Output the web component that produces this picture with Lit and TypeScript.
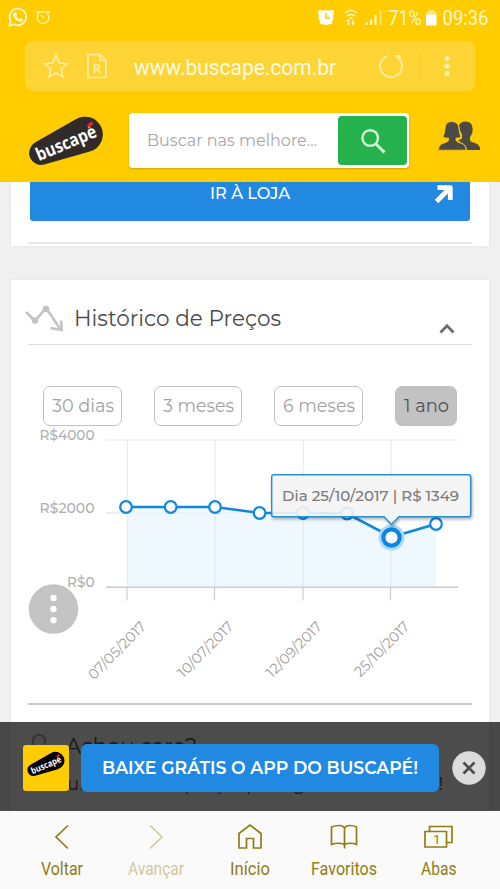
import { LitElement, html, svg, css } from "lit";
import { customElement } from "lit/decorators.js";

const SANS = 'Montserrat, Inter, "Open Sans", sans-serif';
const ROBOTO = 'Roboto, "Liberation Sans", sans-serif';

// A line of text fitted to a fixed width; the baseline sits `size` pixels below its top.
const label = (text: string, w: number, size: number, fill: string, weight = 400, family = SANS) => html`
  <svg class="label" width=${w} height=${Math.round(size * 1.3)} overflow="visible">
    <text x="0" y=${size} font-family=${family} font-size=${size} font-weight=${weight} fill=${fill}
      textLength=${w} lengthAdjust="spacingAndGlyphs">${text}</text>
  </svg>`;

const logo = (w: number, fill: string) => html`
  <svg class="mark" width=${w} viewBox="0 0 76 52" height=${(w * 52) / 76}>
    <path fill=${fill} d="M7 27.6 48.2 4A17.8 17.8 0 1 1 61.8 36.6L16.3 49.5A12 12 0 0 1 7 27.6Z"/>
    <text transform="translate(11 46.3) rotate(-23)" x="0" y="0" font-family="Open Sans, sans-serif" font-weight="700" font-size="18"
      fill="#fff" textLength="64" lengthAdjust="spacingAndGlyphs">buscapé</text>
    <path d="M59.800 11.500 64.500 7.500" stroke="#e0262c" stroke-width="3.400"/>
  </svg>`;

const points = [[126, 507], [170.7, 507], [215, 507], [259.6, 513], [303, 513], [347, 513.5], [391.5, 537], [436, 524]];
const dates: [number, string, number][] = [[127.5, "07/05/2017", 75], [215, "10/07/2017", 72], [303.5, "12/09/2017", 72], [391, "25/10/2017", 71]];
const levels: [number, string, number][] = [[440, "R$4000", 55], [513, "R$2000", 55], [587, "R$0", 27.5]];

@customElement("price-chart")
class PriceChart extends LitElement {
  static styles = css`:host, svg { display: block; } .shadow { filter: drop-shadow(1px 2px 1.5px rgba(0,0,0,.3)); }`;
  render() {
    const line = points.map((p) => p.join(",")).join(" ");
    return html`<svg width="478" height="277" viewBox="11 426 478 277">
      ${levels.map(([y, t, w]) => svg`
        <path d=${`M106 ${y}H458`} stroke="#efefef" stroke-width="1.5"/>
        <text x=${94.5 - w} y=${y - 0.3} font-family=${SANS} font-size="14" font-weight="500" fill="#b0b0b0"
          textLength=${w} lengthAdjust="spacingAndGlyphs">${t}</text>`)}
      <polygon points=${`128,587 128,507 ${line} 436,587`} fill="#eff8fe"/>
      ${dates.map(([x, t, w]) => svg`
        <path d=${`M${x} 440V587`} stroke="#dfe7ed" stroke-width="1.3" opacity=".75"/>
        <path d=${`M${x - 0.5} 587V600.500`} stroke="#c6ccd2" stroke-width="1.2"/>
        <text transform=${`translate(${x + 19.5} 627.5) rotate(-45)`} font-family=${SANS} font-size="14.500" font-weight="400"
          fill="#a0a0a0" text-anchor="end" textLength=${w} lengthAdjust="spacingAndGlyphs">${t}</text>`)}
      <path d="M106 513H458" stroke="#e2e9ee" stroke-width="1" opacity=".6"/>
      <path d="M106 587.300H458" stroke="#c5cfda" stroke-width="1.4"/>
      <polyline points=${line} fill="none" stroke="#1088e0" stroke-width="2.600"/>
      ${points.filter((_, i) => i !== 6).map(([x, y]) => svg`<circle cx=${x} cy=${y} r="5.800" fill="#fff" stroke="#1088e0" stroke-width="2.200"/>`)}
      <circle cx="391.500" cy="537.500" r="13" fill="#a9dcf8"/>
      <circle cx="391.500" cy="537.500" r="8.200" fill="#fff" stroke="#0b86e6" stroke-width="4.200"/>
      <path class="shadow" d="M273.500 474.800H468.500Q470.700 474.800 470.700 477V514.500Q470.700 516.700 468.500 516.700H399L391.500 524.500 384 516.700H273.500Q271.700 516.700 271.700 514.500V477Q271.700 474.800 273.500 474.800Z"
        fill="#fdfdfd" fill-opacity=".87" stroke="#2590d8" stroke-width="1.500"/>
      <text x="282" y="500.700" font-family=${SANS} font-size="15.500" font-weight="500" fill="#7a7a7a" textLength="177"
        lengthAdjust="spacingAndGlyphs">Dia 25/10/2017 | R$ 1349</text>
    </svg>`;
  }
}

@customElement("app-root")
class AppRoot extends LitElement {
  static styles = css`
    :host { display: flex; flex-direction: column; width: 500px; height: 889px; overflow: hidden; background: #f0f0f0; }
    * { box-sizing: border-box; }
    svg { display: block; flex: none; }
    .label, .mark { overflow: visible; }
    header { flex: none; height: 182px; background: #ffcc00; }
    .status { height: 41px; padding: 5px 11px 0 7px; display: flex; align-items: flex-start; justify-content: space-between; }
    .url { margin: 0 25px; height: 50px; border-radius: 8px; background: #fdd435; display: flex; align-items: center; padding: 0 20px 0 18px; }
    .address { margin-left: 27px; margin-top: 1px; }
    .reload { margin-left: 42px; }
    .sep { width: 1px; height: 24px; background: #f8cb28; margin: 0 21px 0 16px; }
    .bar { height: 91px; display: flex; padding: 0 19px 0 28px; }
    .logo { padding-top: 24px; }
    .search { margin: 22px 0 0 25px; width: 281px; height: 55px; border-radius: 4px; background: #fff; display: flex;
      padding: 3px 2px 3px 18px; justify-content: space-between; box-shadow: 0 1px 2px rgba(120,90,0,.35); }
    .search .label { margin-top: 13px; }
    .go { width: 69px; height: 49px; border-radius: 4px; background: #25b14b; display: grid; place-items: center; }
    .people { margin: 30px 0 0 29px; }
    main { flex: 1; min-height: 0; position: relative; overflow: hidden; }
    .card { margin: 0 11px; background: #fff; box-shadow: 0 0 4px rgba(0,0,0,.06); }
    .offer { height: 64px; padding: 0 17px; }
    .store { margin: 0 2px; height: 38.5px; background: #2189e1; border-radius: 0 0 3px 3px; display: flex; padding: 0 16px 0 180px; justify-content: space-between; }
    .store svg + svg { margin-top: 2px; }
    .rule { height: 2px; background: #e9e9e9; margin-top: 21.5px; }
    .history { margin-top: 34px; height: 600px; }
    .title { margin: 0 17px; height: 65px; border-bottom: 1px solid #dedede; display: flex; align-items: flex-start; }
    .trend { margin: 23px 0 0 -3px; }
    .title .label { margin: 24px 0 0 11px; }
    .caret { margin: 43px 17px 0 auto; }
    .ranges { display: flex; justify-content: space-between; padding: 41px 32px 0; height: 81px; }
    .range { height: 40px; border: 1.5px solid #c2c2c2; border-radius: 7px; padding: 6px 7.5px 0; }
    .range.on { background: #c2c2c2; }
    .end { height: 1.5px; background: #c9c9c9; margin: 0 17px; }
    .next { padding: 27px 17px 0; }
    .row { display: flex; gap: 16px; }
    .row + .row { padding-top: 10px; }
    .fab { position: absolute; left: 28px; top: 402px; }
    .promo { position: absolute; inset: auto 0 0 0; height: 89px; background: rgba(0,0,0,.7); display: flex; align-items: center; padding: 2px 14px 0 23px; }
    .tile { width: 46px; height: 46px; border-radius: 3px; background: #ffcc00; display: flex; justify-content: center; padding-top: 6px; }
    .install { margin-left: 11.5px; width: 358.5px; height: 48px; border-radius: 6px; background: #2189e1; padding: 12.5px 21px; }
    .close { margin-left: auto; }
    nav { height: 78px; flex: none; background: #fafafa; display: flex; padding: 0 14.500px; }
    .tab { width: 94.400px; display: flex; flex-direction: column; align-items: center; padding-top: 11px; gap: 4.500px; }
  `;

  tab(icon: unknown, text: string, w: number, fill = "#8f7d14") {
    return html`<div class="tab">
      <svg width="30" height="30" viewBox="0 0 30 30" fill="none" stroke=${fill} stroke-width="1.700">${icon}</svg>
      ${label(text, w, 17.8, fill, 400, ROBOTO)}</div>`;
  }

  render() {
    return html`
      <header>
        <div class="status">
          <svg width="46" height="24" viewBox="7 5 46 24" fill="none" stroke="#fff7cf">
            <path d="M9.500 25.500 10.700 21A8.300 8.300 0 1 1 14 24.200Z" stroke-width="1.800"/>
            <path d="M14.500 12.500q1.500-1 2.200.8l.4 1.500-1 1.200q1.300 2.300 3.400 3.200l1.300-1.300 2.300 1.100q.3 2.500-2.500 2.700-6.500-1-7.600-7-.1-1.500 1.500-2.200Z" fill="#fff7cf" stroke="none"/>
            <circle cx="43" cy="17.500" r="5.800" stroke-width="1.300"/><path d="M37 13.500v-2h3M49 13.500v-2h-3M41 15l2 2.500h1.500" stroke-width="1.200"/>
          </svg>
          <svg class="label" width="173" height="26" viewBox="316 5 173 26">
            <circle cx="326" cy="17.500" r="7.400" fill="#fff"/>
            <path d="M319 14.500v-3.500h3.500M333 14.500v-3.500h-3.500M320 24l2-2M332 24l-2-2" stroke="#fff" stroke-width="1.700" fill="none"/>
            <path d="M326 13v5h4" stroke="#ffcc00" stroke-width="1.500" fill="none"/>
            <path d="M345 13q6-5 12 0M347 16q4-3 8 0M349.500 18.500q1.500-1 3 0" stroke="#fff7cf" stroke-width="1.500" fill="none"/>
            <path d="M346.500 21l2-2 2 2h-1.200v4h-1.600v-4zM351 23h1.200v-3h1.600v3h1.200l-2 2.300z" fill="#fff7cf"/>
            <path d="M366.500 25v-2.500M371 25v-5.500M375.500 25v-10" stroke="#fff7cf" stroke-width="2"/><path d="M380.500 25V10" stroke="#ffe57e" stroke-width="1.600"/>
            <text x="388.500" y="25" font-family=${ROBOTO} font-size="20.500" fill="#fff7cf" textLength="33" lengthAdjust="spacingAndGlyphs">71%</text>
            <path d="M428.500 10h5.500v2h2.500v2.500h-10.500v-2.500h2.500z" fill="#ffe57e"/><path d="M426 14.500h10.500v11h-10.500z" fill="#fff"/>
            <text x="442.500" y="25" font-family=${ROBOTO} font-size="20.500" fill="#fff7cf" textLength="46" lengthAdjust="spacingAndGlyphs">09:36</text>
          </svg>
        </div>
        <div class="url">
          <svg width="26" height="26" viewBox="0 0 26 26" fill="none" stroke="#ffeb9e" stroke-width="1.800"><path d="m13 2.300 3.300 7.600 8 .9-6 5.300 1.600 7.900L13 20l-6.900 4 1.600-7.900-6-5.300 8-.9Z"/></svg>
          <svg width="38" height="26" viewBox="-18 0 38 26" fill="none" stroke="#ffeb9e" stroke-width="1.700"><path d="M1 1.500h12l6 6v17H1ZM13 1.500V7.500H19"/><text x="6" y="19.500" font-family=${ROBOTO} font-size="12.500" font-weight="700" fill="#ffeb9e" stroke="none">R</text></svg>
          <div class="address">${label("www.buscape.com.br", 202, 21.5, "#fffbe4", 400, ROBOTO)}</div>
          <svg class="reload" width="26" height="26" viewBox="0 0 26 26" fill="none" stroke="#ffeb9e" stroke-width="1.900"><path d="M9.500 2.800A11 11 0 1 0 21 5.500"/><path d="M15.500 2H22.500v6.500z" fill="#ffeb9e" stroke="none"/></svg>
          <div class="sep"></div>
          <svg width="10" height="24" viewBox="0 0 10 24" fill="#fff0b4"><circle cx="5" cy="4.500" r="2.500"/><circle cx="5" cy="12" r="2.500"/><circle cx="5" cy="19.500" r="2.500"/></svg>
        </div>
        <div class="bar">
          <div class="logo">${logo(76, "#302b28")}</div>
          <div class="search">
            ${label("Buscar nas melhore...", 170, 17, "#a8a8a8", 400)}
            <div class="go"><svg width="28" height="28" viewBox="0 0 28 28" fill="none" stroke="#cff5d4"><circle cx="11.200" cy="11" r="7.800" stroke-width="2.500"/><path d="m16.500 16.500 9 9" stroke-width="3"/></svg></div>
          </div>
          <svg class="people" width="43" height="31" viewBox="438 121 43 31" fill="#4d4a45">
            <path d="M459 125q2-3.500 6.500-3.500 6.500 0 7 6.500.8 5-2.500 9v3.500q1 1.500 5 2.500 5 1.500 5.200 7H467q-.5-5-5-7l-4-2.500 4-2v-4q-2-3-3-9.500Z"/>
            <path d="M451.500 121.500q7 0 7.500 7 0 4 2 8.500-2.500 1.500-5 1v2.500q1 1.500 5 2.700 5 1.300 5 7h-27.500q0-5.700 5-7 4-1.200 5-2.700V138q-3 .5-5.500-1 2-4.500 2-8.500.5-7 6.500-7Z" stroke="#ffcc00" stroke-width=".8"/>
          </svg>
        </div>
      </header>
      <main>
        <section class="card offer">
          <div class="store">${label("IR À LOJA", 80, 16.8, "#fff", 500)}
            <svg width="20" height="20" viewBox="0 0 20 20" fill="none" stroke="#fff" stroke-width="4.800" stroke-linejoin="round"><path d="M3.500 3.600H16.300V16M16 4 2.500 17.500"/></svg>
          </div>
          <div class="rule"></div>
        </section>
        <section class="card history">
          <div class="title">
            <svg class="trend" width="38" height="29" viewBox="25 303 38 29" fill="none" stroke="#c4c4c4" stroke-width="2.600"><path d="m26 312 9 9 11-13 15 22M50.500 328l11.500 2-1-9.500"/><circle cx="35" cy="320.500" r="3.300" fill="#c4c4c4" stroke="none"/><circle cx="46" cy="309" r="3.300" fill="#c4c4c4" stroke="none"/></svg>
            ${label("Histórico de Preços", 207, 22, "#4b4b4b", 400)}
            <svg class="caret" width="16" height="12" viewBox="0 0 16 12" fill="none" stroke="#6c6c6c" stroke-width="2.800"><path d="m1.500 9.500 6.500-6.700 6.500 6.700"/></svg>
          </div>
          <div class="ranges">
            <div class="range">${label("30 dias", 62, 18.5, "#a2a2a2", 400)}</div>
            <div class="range">${label("3 meses", 71, 18.5, "#a2a2a2", 400)}</div>
            <div class="range">${label("6 meses", 72, 18.5, "#a2a2a2", 400)}</div>
            <div class="range on">${label("1 ano", 45, 18.5, "#505050", 400)}</div>
          </div>
          <price-chart></price-chart>
          <div class="end"></div>
          <div class="next">
            <div class="row"><svg width="22" height="30" viewBox="0 0 22 30" fill="none" stroke="#aaa" stroke-width="2"><path d="M5 22V9q0-6 6-6t6 6v13M2 22h18"/></svg>
            ${label("Achou caro?", 131, 21.5, "#4b4b4b", 400)}</div>
            <div class="row">${label("Crie um alerta de preço que a gente avisa você!", 415, 18, "#4b4b4b", 400)}</div>
          </div>
        </section>
        <svg class="fab" width="51" height="51" viewBox="0 0 51 51"><circle cx="25.500" cy="25" r="24.800" fill="#c4c4c4"/><g fill="#fff"><circle cx="25.500" cy="14" r="3.200"/><circle cx="25.500" cy="25" r="3.200"/><circle cx="25.500" cy="36.200" r="3.200"/></g></svg>
        <div class="promo">
          <div class="tile">${logo(38, "#000")}</div>
          <div class="install">${label("BAIXE GRÁTIS O APP DO BUSCAPÉ!", 316, 18, "#fff", 600)}</div>
          <svg class="close" width="34" height="34" viewBox="0 0 34 34"><circle cx="17" cy="17" r="16.700" fill="#dcdcdc"/><path d="m11.500 11.500 11 11m0-11-11 11" stroke="#4c4c4c" stroke-width="2.600"/></svg>
        </div>
      </main>
      <nav>
        ${this.tab(svg`<path d="M21 3.500 9 15l12 11.500"/>`, "Voltar", 42)}
        ${this.tab(svg`<path d="M9 3.500 21 15 9 26.500"/>`, "Avançar", 56, "#d0c99c")}
        ${this.tab(svg`<path d="M4 11.500 15 3l11 8.500V26H18.500V16.500h-7v9.500H4Z"/>`, "Início", 40)}
        ${this.tab(svg`<path d="M15.500 26.500V6q-1.500-2.500-5-2.500Q6 3.500 2.500 5v17.500q7-2.500 13 0M15.500 6q1.500-2.500 5-2.500 4 0 7 1.500v17.500q-6-2.500-12 0"/>`, "Favoritos", 66)}
        ${this.tab(svg`<path d="M2 9.500h21.500v15.500H2ZM6.500 9.500V4.500H29V20.500H23.500"/><text x="10" y="22" font-family=${ROBOTO} font-size="13.500" fill="#8f7d14" stroke="none">1</text>`, "Abas", 35.5)}
      </nav>`;
  }
}
